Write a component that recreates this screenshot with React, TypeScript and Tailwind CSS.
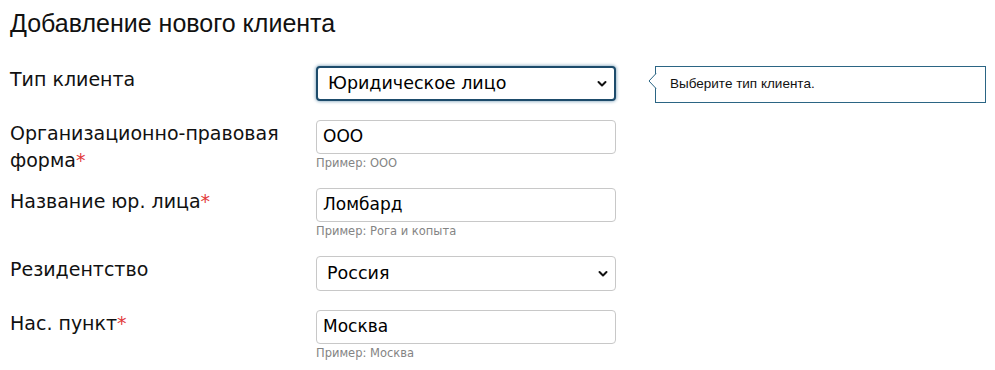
import React from "react";

const labelFont = "font-['DejaVu_Sans','Verdana',sans-serif]";

function Chevron() {
  return (
    <svg width="10" height="7" viewBox="0 0 10 7" className="absolute right-[7px] top-1/2 -translate-y-1/2">
      <path d="M1.5 1.5 L5 5 L8.5 1.5" fill="none" stroke="#111" strokeWidth="2" strokeLinecap="round" strokeLinejoin="round" />
    </svg>
  );
}

function Label({ children, req }: { children: React.ReactNode; req?: boolean }) {
  return (
    <div className={`w-[306px] shrink-0 pr-2 text-[19px] leading-[27px] text-[#111] ${labelFont}`}>
      {children}
      {req && <span className="text-[#e23b3b]">*</span>}
    </div>
  );
}

function Field({ value, hint }: { value: string; hint?: string }) {
  return (
    <div className="flex w-[300px] flex-col">
      <div className={`flex h-[34px] items-center rounded-[4px] border border-[#c8c8c8] bg-white px-[6px] text-[17px] text-black ${labelFont}`}>
        {value}
      </div>
      {hint && (
        <div className={`mt-[2px] text-[11.5px] leading-[14px] text-[#848484] ${labelFont}`}>{hint}</div>
      )}
    </div>
  );
}

function Select({ value, focused }: { value: string; focused?: boolean }) {
  return (
    <div
      className={`relative flex h-[35px] w-[300px] items-center rounded-[4px] bg-white pl-[10px] text-[17.5px] text-black ${labelFont} ${
        focused
          ? "border-2 border-[#1d4b6b] shadow-[0_0_3px_1px_rgba(40,100,140,0.45)]"
          : "border border-[#c8c8c8]"
      }`}
    >
      {value}
      <Chevron />
    </div>
  );
}

export default function App() {
  return (
    <div className="h-[370px] w-[995px] bg-white pl-[10px]">
      <h1 className="h-[66px] pt-[8px] font-['Liberation_Sans',Arial,sans-serif] text-[25px] leading-[30px] text-[#111]">
        Добавление нового клиента
      </h1>

      <div className="flex h-[54px] items-start">
        <Label>Тип клиента</Label>
        <div className="flex items-start">
          <Select value="Юридическое лицо" focused />
          <div className="relative ml-[39px] flex h-[37px] w-[331px] items-center border border-[#2b6584] bg-white pl-[14px] font-['Liberation_Sans',Arial,sans-serif] text-[13.5px] text-[#111]">
            Выберите тип клиента.
            <svg width="9" height="16" viewBox="0 0 9 16" className="absolute left-[-8px] top-[6px]">
              <path d="M8.5 0 L1 8 L8.5 16" fill="#fff" stroke="#2b6584" strokeWidth="1" />
              <rect x="8.5" y="0" width="1" height="16" fill="#fff" />
            </svg>
          </div>
        </div>
      </div>

      <div className="flex h-[68px] items-start">
        <Label req>Организационно-правовая форма</Label>
        <Field value="ООО" hint="Пример: ООО" />
      </div>

      <div className="flex h-[68px] items-start">
        <Label req>Название юр. лица</Label>
        <Field value="Ломбард" hint="Пример: Рога и копыта" />
      </div>

      <div className="flex h-[54px] items-start">
        <Label>Резидентство</Label>
        <Select value="Россия" />
      </div>

      <div className="flex items-start">
        <Label req>Нас. пункт</Label>
        <Field value="Москва" hint="Пример: Москва" />
      </div>
    </div>
  );
}
